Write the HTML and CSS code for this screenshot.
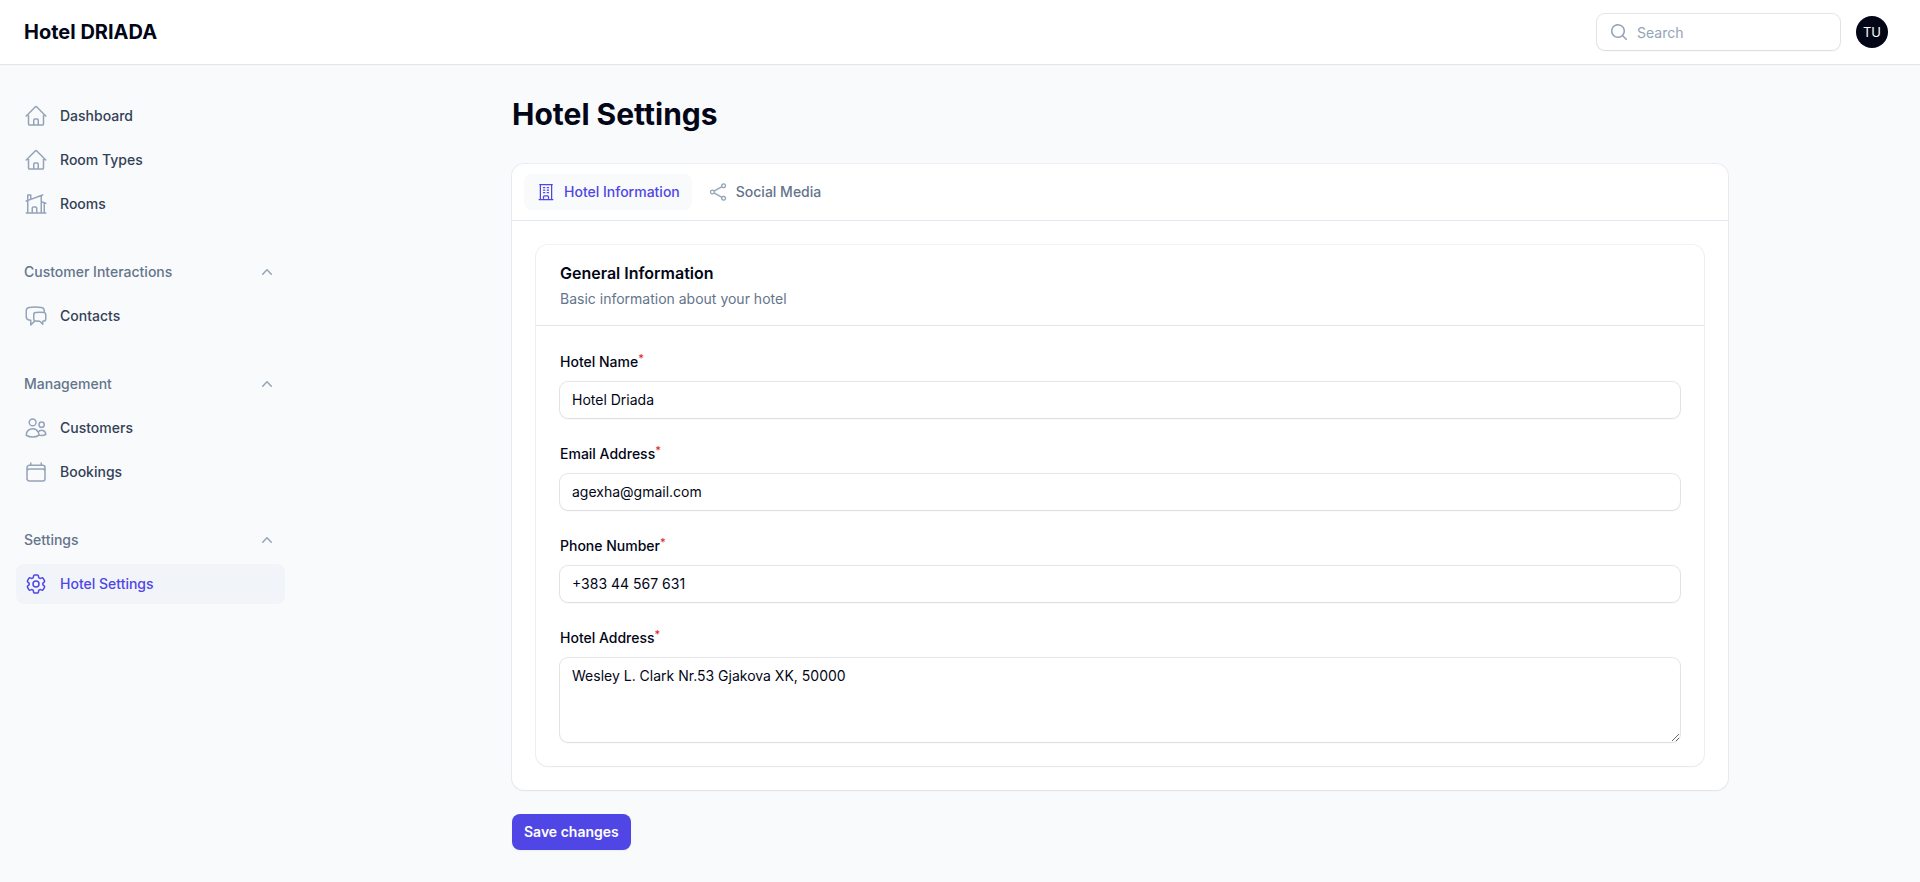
FILE: index.html
```html
<!DOCTYPE html>
<html lang="en">
<head>
<meta charset="utf-8">
<meta name="viewport" content="width=device-width, initial-scale=1">
<title>Hotel Settings - Hotel DRIADA</title>
<link rel="stylesheet" href="styles.css">
</head>
<body>
<svg class="sprite" aria-hidden="true">
  <symbol id="home" viewBox="0 0 24 24"><path d="m2.25 12 8.954-8.955c.44-.439 1.152-.439 1.591 0L21.75 12M4.5 9.75v10.125c0 .621.504 1.125 1.125 1.125H9.75v-4.875c0-.621.504-1.125 1.125-1.125h2.25c.621 0 1.125.504 1.125 1.125V21h4.125c.621 0 1.125-.504 1.125-1.125V9.75M8.25 21h8.25"/></symbol>
  <symbol id="home-modern" viewBox="0 0 24 24"><path d="M8.25 21v-4.875c0-.621.504-1.125 1.125-1.125h2.25c.621 0 1.125.504 1.125 1.125V21m0 0h4.5V3.545M12.75 21h7.5V10.75M2.25 21h1.5m18 0h-18M2.25 9l4.5-1.636M18.75 3l-1.5.545m0 6.205 3 1m1.5.5-1.5-.5M6.75 7.364V3h-3v18m3-13.636 10.5-3.819"/></symbol>
  <symbol id="chat" viewBox="0 0 24 24"><path d="M20.25 8.511c.884.284 1.5 1.128 1.5 2.097v4.286c0 1.136-.847 2.1-1.98 2.193-.34.027-.68.052-1.02.072v3.091l-3-3c-1.354 0-2.694-.055-4.02-.163a2.115 2.115 0 0 1-.825-.242m9.345-8.334a2.126 2.126 0 0 0-.476-.095 48.64 48.64 0 0 0-8.048 0c-1.131.094-1.976 1.057-1.976 2.192v4.286c0 .837.46 1.58 1.155 1.951m9.345-8.334V6.637c0-1.621-1.152-3.026-2.76-3.235A48.455 48.455 0 0 0 11.25 3c-2.115 0-4.198.137-6.24.402-1.608.209-2.76 1.614-2.76 3.235v6.226c0 1.621 1.152 3.026 2.76 3.235.577.075 1.157.14 1.74.194V21l4.155-4.155"/></symbol>
  <symbol id="users" viewBox="0 0 24 24"><path d="M15 19.128a9.38 9.38 0 0 0 2.625.372 9.337 9.337 0 0 0 4.121-.952 4.125 4.125 0 0 0-7.533-2.493M15 19.128v-.003c0-1.113-.285-2.16-.786-3.07M15 19.128v.106A12.318 12.318 0 0 1 8.624 21c-2.331 0-4.512-.645-6.374-1.766l-.001-.109a6.375 6.375 0 0 1 11.964-3.07M12 6.375a3.375 3.375 0 1 1-6.75 0 3.375 3.375 0 0 1 6.75 0Zm8.25 2.25a2.625 2.625 0 1 1-5.25 0 2.625 2.625 0 0 1 5.25 0Z"/></symbol>
  <symbol id="calendar" viewBox="0 0 24 24"><path d="M6.75 3v2.25M17.25 3v2.25M3 18.75V7.5a2.25 2.25 0 0 1 2.25-2.25h13.5A2.25 2.25 0 0 1 21 7.5v11.25m-18 0A2.25 2.25 0 0 0 5.25 21h13.5A2.25 2.25 0 0 0 21 18.75m-18 0v-7.5A2.25 2.25 0 0 1 5.25 9h13.5A2.25 2.25 0 0 1 21 11.25v7.5"/></symbol>
  <symbol id="cog" viewBox="0 0 24 24"><path d="M9.594 3.94c.09-.542.56-.94 1.11-.94h2.593c.55 0 1.02.398 1.11.94l.213 1.281c.063.374.313.686.645.87.074.04.147.083.22.127.325.196.72.257 1.075.124l1.217-.456a1.125 1.125 0 0 1 1.37.49l1.296 2.247a1.125 1.125 0 0 1-.26 1.431l-1.003.827c-.293.241-.438.613-.43.992a7.723 7.723 0 0 1 0 .255c-.008.378.137.75.43.991l1.004.827c.424.35.534.955.26 1.43l-1.298 2.247a1.125 1.125 0 0 1-1.369.491l-1.217-.456c-.355-.133-.75-.072-1.076.124a6.47 6.47 0 0 1-.22.128c-.331.183-.581.495-.644.869l-.213 1.281c-.09.543-.56.94-1.11.94h-2.594c-.55 0-1.019-.398-1.11-.94l-.213-1.281c-.062-.374-.312-.686-.644-.87a6.52 6.52 0 0 1-.22-.127c-.325-.196-.72-.257-1.076-.124l-1.217.456a1.125 1.125 0 0 1-1.369-.49l-1.297-2.247a1.125 1.125 0 0 1 .26-1.431l1.004-.827c.292-.24.437-.613.43-.991a6.932 6.932 0 0 1 0-.255c.007-.38-.138-.751-.43-.992l-1.004-.827a1.125 1.125 0 0 1-.26-1.43l1.297-2.247a1.125 1.125 0 0 1 1.37-.491l1.216.456c.356.133.751.072 1.076-.124.072-.044.146-.086.22-.128.332-.183.582-.495.644-.869l.214-1.28Z"/><path d="M15 12a3 3 0 1 1-6 0 3 3 0 0 1 6 0Z"/></symbol>
  <symbol id="building" viewBox="0 0 24 24"><path d="M3.75 21h16.5M4.5 3h15M5.25 3v18m13.5-18v18M9 6.75h1.5m-1.5 3h1.5m-1.5 3h1.5m3-6H15m-1.5 3H15m-1.5 3H15M9 21v-3.375c0-.621.504-1.125 1.125-1.125h3.75c.621 0 1.125.504 1.125 1.125V21"/></symbol>
  <symbol id="share" viewBox="0 0 24 24"><path d="M7.217 10.907a2.25 2.25 0 1 0 0 2.186m0-2.186c.18.324.283.696.283 1.093s-.103.77-.283 1.093m0-2.186 9.566-5.314m-9.566 7.5 9.566 5.314m0 0a2.25 2.25 0 1 0 3.935 2.186 2.25 2.25 0 0 0-3.935-2.186Zm0-12.814a2.25 2.25 0 1 0 3.933-2.185 2.25 2.25 0 0 0-3.933 2.185Z"/></symbol>
  <symbol id="chevron-up" viewBox="0 0 20 20"><path d="M14.77 12.79a.75.75 0 0 1-1.06-.02L10 8.832 6.29 12.77a.75.75 0 1 1-1.08-1.04l4.25-4.5a.75.75 0 0 1 1.08 0l4.25 4.5a.75.75 0 0 1-.02 1.06Z"/></symbol>
  <symbol id="search" viewBox="0 0 20 20"><path d="M9 3.5a5.5 5.5 0 1 0 0 11 5.5 5.5 0 0 0 0-11ZM2 9a7 7 0 1 1 12.452 4.391l3.328 3.329a.75.75 0 1 1-1.06 1.06l-3.329-3.328A7 7 0 0 1 2 9Z"/></symbol>
</svg>

<header class="topbar">
  <a class="brand" href="#">Hotel DRIADA</a>
  <div class="topbar-end">
    <label class="search">
      <svg class="icon icon-small icon-solid" aria-hidden="true"><use href="#search"/></svg>
      <input class="search-input" type="search" placeholder="Search" aria-label="Search">
    </label>
    <button class="avatar" type="button" aria-label="User menu">TU</button>
  </div>
</header>

<div class="layout">
  <nav class="sidebar" aria-label="Main">
    <div class="nav-group">
      <a class="nav-item" href="#"><svg class="icon" aria-hidden="true"><use href="#home"/></svg>Dashboard</a>
      <a class="nav-item" href="#"><svg class="icon" aria-hidden="true"><use href="#home"/></svg>Room Types</a>
      <a class="nav-item" href="#"><svg class="icon" aria-hidden="true"><use href="#home-modern"/></svg>Rooms</a>
    </div>
    <div class="nav-group">
      <button class="nav-heading" type="button" aria-expanded="true">Customer Interactions<svg class="icon icon-small icon-solid" aria-hidden="true"><use href="#chevron-up"/></svg></button>
      <a class="nav-item" href="#"><svg class="icon" aria-hidden="true"><use href="#chat"/></svg>Contacts</a>
    </div>
    <div class="nav-group">
      <button class="nav-heading" type="button" aria-expanded="true">Management<svg class="icon icon-small icon-solid" aria-hidden="true"><use href="#chevron-up"/></svg></button>
      <a class="nav-item" href="#"><svg class="icon" aria-hidden="true"><use href="#users"/></svg>Customers</a>
      <a class="nav-item" href="#"><svg class="icon" aria-hidden="true"><use href="#calendar"/></svg>Bookings</a>
    </div>
    <div class="nav-group">
      <button class="nav-heading" type="button" aria-expanded="true">Settings<svg class="icon icon-small icon-solid" aria-hidden="true"><use href="#chevron-up"/></svg></button>
      <a class="nav-item nav-item-active" href="#" aria-current="page"><svg class="icon" aria-hidden="true"><use href="#cog"/></svg>Hotel Settings</a>
    </div>
  </nav>

  <main class="main">
    <h1 class="page-title">Hotel Settings</h1>
    <form class="form">
      <div class="card">
        <div class="tabs" role="tablist">
          <button class="tab tab-active" type="button" role="tab" aria-selected="true"><svg class="icon icon-small" aria-hidden="true"><use href="#building"/></svg>Hotel Information</button>
          <button class="tab" type="button" role="tab" aria-selected="false"><svg class="icon icon-small" aria-hidden="true"><use href="#share"/></svg>Social Media</button>
        </div>
        <div class="tab-panel" role="tabpanel">
          <section class="card section">
            <header class="section-header">
              <h2 class="section-title">General Information</h2>
              <p class="section-text">Basic information about your hotel</p>
            </header>
            <div class="fields">
              <div class="field">
                <label class="label" for="name">Hotel Name<sup class="required">*</sup></label>
                <input class="input" id="name" type="text" value="Hotel Driada" required>
              </div>
              <div class="field">
                <label class="label" for="email">Email Address<sup class="required">*</sup></label>
                <input class="input" id="email" type="email" value="agexha@gmail.com" required>
              </div>
              <div class="field">
                <label class="label" for="phone">Phone Number<sup class="required">*</sup></label>
                <input class="input" id="phone" type="tel" value="+383 44 567 631" required>
              </div>
              <div class="field">
                <label class="label" for="address">Hotel Address<sup class="required">*</sup></label>
                <textarea class="input" id="address" rows="3" required>Wesley L. Clark Nr.53 Gjakova XK, 50000</textarea>
              </div>
            </div>
          </section>
        </div>
      </div>
      <button class="save" type="submit">Save changes</button>
    </form>
  </main>
</div>
</body>
</html>
```
FILE: styles.css
```css
:root {
  --gray-50: #f8fafc;
  --gray-100: #f1f5f9;
  --gray-200: #e2e8f0;
  --gray-400: #94a3b8;
  --gray-500: #64748b;
  --gray-700: #334155;
  --gray-950: #020617;
  --primary: #4f46e5;
  --danger: #dc2626;
  --ring: 0 0 0 1px rgb(2 6 23 / 5%);
  --ring-strong: 0 0 0 1px rgb(2 6 23 / 10%);
  --shadow: 0 1px 2px rgb(0 0 0 / 5%);
}

*,
*::before,
*::after {
  box-sizing: border-box;
}

body {
  margin: 0;
  min-height: 100vh;
  background: var(--gray-50);
  color: var(--gray-950);
  font-family: Inter, "Liberation Sans", sans-serif;
  font-size: 14px;
  line-height: 24px;
}

button,
input,
textarea {
  margin: 0;
  border: 0;
  background: none;
  color: inherit;
  font: inherit;
}

button {
  cursor: pointer;
}

a {
  color: inherit;
  text-decoration: none;
}

h1,
h2,
p {
  margin: 0;
}

.sprite {
  display: none;
}

.icon {
  flex: none;
  width: 24px;
  height: 24px;
  color: var(--gray-400);
  fill: none;
  stroke: currentColor;
  stroke-width: 1.5;
  stroke-linecap: round;
  stroke-linejoin: round;
}

.icon-small {
  width: 20px;
  height: 20px;
}

.icon-solid {
  fill: currentColor;
  stroke: none;
}

.topbar {
  position: sticky;
  top: 0;
  z-index: 1;
  display: flex;
  align-items: center;
  justify-content: space-between;
  height: 64px;
  padding: 0 32px 0 24px;
  background: #fff;
  box-shadow: var(--ring), var(--shadow);
}

.brand {
  font-size: 20px;
  font-weight: 700;
  letter-spacing: normal;
}

.topbar-end {
  display: flex;
  align-items: center;
  gap: 16px;
}

.search {
  display: flex;
  align-items: center;
  gap: 8px;
  width: 243px;
  padding: 0 12px;
  border-radius: 8px;
  background: #fff;
  box-shadow: var(--ring-strong), var(--shadow);
}

.search-input {
  flex: 1;
  min-width: 0;
  height: 36px;
  padding: 0;
  outline: none;
}

.search-input::placeholder {
  color: var(--gray-400);
}

.avatar {
  width: 32px;
  height: 32px;
  padding: 0;
  border-radius: 50%;
  background: var(--gray-950);
  color: #fff;
  font-size: 13px;
}

.layout {
  display: flex;
  align-items: flex-start;
}

.sidebar {
  display: flex;
  flex: none;
  flex-direction: column;
  gap: 28px;
  width: 320px;
  padding: 32px 35px 32px 16px;
}

.nav-group {
  display: flex;
  flex-direction: column;
  gap: 4px;
}

.nav-item,
.nav-heading {
  display: flex;
  align-items: center;
  padding: 8px;
  border-radius: 8px;
  font-weight: 500;
}

.nav-item {
  gap: 12px;
  color: var(--gray-700);
}

.nav-heading {
  justify-content: space-between;
  color: var(--gray-500);
}

.nav-item-active {
  background: var(--gray-100);
}

.nav-item-active,
.nav-item-active .icon {
  color: var(--primary);
}

.main {
  display: flex;
  flex: 1;
  flex-direction: column;
  gap: 32px;
  min-width: 0;
  max-width: 1280px;
  margin: 0 auto;
  padding: 32px;
}

.page-title {
  font-size: 30px;
  font-weight: 700;
  line-height: 36px;
}

.form {
  display: flex;
  flex-direction: column;
  align-items: stretch;
  gap: 24px;
}

.card {
  border-radius: 12px;
  background: #fff;
  box-shadow: var(--ring), var(--shadow);
}

.tabs {
  display: flex;
  gap: 4px;
  padding: 10px 12px;
  border-bottom: 1px solid var(--gray-200);
}

.tab {
  display: flex;
  align-items: center;
  gap: 8px;
  padding: 8px 12px;
  border-radius: 8px;
  color: var(--gray-500);
  font-weight: 500;
  line-height: 20px;
}

.tab-active {
  background: var(--gray-50);
}

.tab-active,
.tab-active .icon {
  color: var(--primary);
}

.tab-panel {
  padding: 24px;
}

.section-header {
  display: flex;
  flex-direction: column;
  gap: 4px;
  padding: 16px 24px;
  border-bottom: 1px solid var(--gray-200);
}

.section-title {
  font-size: 16px;
  font-weight: 600;
  line-height: 24px;
}

.section-text {
  color: var(--gray-500);
  line-height: 20px;
}

.fields {
  display: flex;
  flex-direction: column;
  gap: 24px;
  padding: 24px;
}

.field {
  display: flex;
  flex-direction: column;
  gap: 8px;
}

.label {
  font-weight: 500;
}

.required {
  color: var(--danger);
  font-size: 11px;
  line-height: 0;
  vertical-align: 5px;
}

.input {
  display: block;
  width: 100%;
  padding: 6px 12px;
  border-radius: 8px;
  background: #fff;
  box-shadow: var(--ring-strong), var(--shadow);
  resize: vertical;
}

.save {
  align-self: flex-start;
  padding: 8px 12px;
  border-radius: 8px;
  background: var(--primary);
  box-shadow: var(--shadow);
  color: #fff;
  font-weight: 600;
  line-height: 20px;
}
```
